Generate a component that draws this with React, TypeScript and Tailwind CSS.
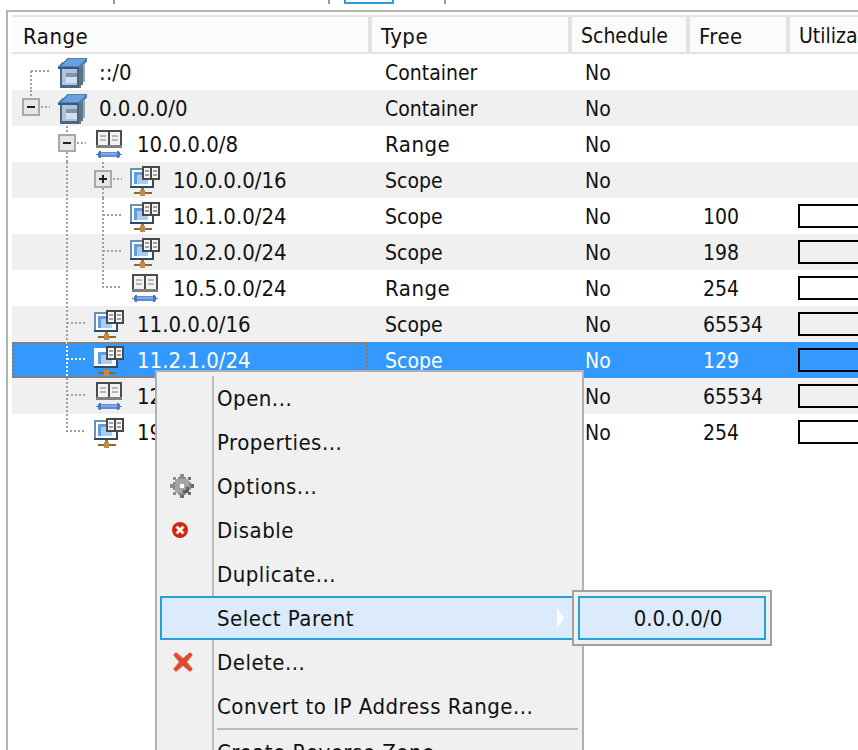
import React from "react";

const font = { fontFamily: '"DejaVu Sans Condensed", "DejaVu Sans", sans-serif' };

function Box() {
  return (
    <svg width="30" height="30" viewBox="0 0 30 30" shapeRendering="crispEdges">
      <path d="M10 0h19v3l-8 8H0V8z" fill="#4f7fb5" />
      <path d="M11 1h16l-7 7H3z" fill="#68a0e0" />
      <path d="M0 9h21v2H0z" fill="#35597f" />
      <path d="M2 11h19v19H2z" fill="#4d6580" />
      <path d="M4 11h15v16H4z" fill="#adc4de" />
      <path d="M21 10h2v20h-2zM23 8h2v19h-2z" fill="#5f7387" />
      <path d="M25 6h2v18h-2z" fill="#9aa6b3" />
      <path d="M8 15h11v4H8z" fill="#8093aa" />
      <path d="M8 19h11v6H8z" fill="#d3e0f0" />
    </svg>
  );
}

function Book() {
  return (
    <svg width="26" height="30" viewBox="0 0 26 30" shapeRendering="crispEdges">
      <path d="M0 0h26v18H0z" fill="#4c4c4c" />
      <path d="M0 15h26v3H0z" fill="#808080" />
      <path d="M2 2h10v13H2zM14 2h10v13H14z" fill="#f3f3f3" />
      <path d="M4 5h6v2H4zM4 9h6v2H4zM16 5h6v2h-6zM16 9h6v2h-6z" fill="#b5b5b5" />
      <path d="M3 22h20v5H3z" fill="#5e8fd6" />
      <path d="M3 23h20v2H3z" fill="#7faae6" />
      <path d="M0 24h3v1H0zM23 24h3v1h-3zM2 22h2v5H2zM22 22h2v5h-2zM3 21h2v7H3zM21 21h2v7h-2z" fill="#4a78c0" />
    </svg>
  );
}

function Scope({ selected = false }: { selected?: boolean }) {
  return (
    <svg width="30" height="30" viewBox="0 0 30 30" shapeRendering="crispEdges">
      <path d="M0 2h24v20H0z" fill={selected ? "#ffffff" : "#6c8fb5"} />
      <path d="M2 4h20v16H2z" fill="#fff" />
      <path d="M4 6h14v12H4z" fill="#5d9de3" />
      <path d="M7 9h11v9H7z" fill="#a8cdf2" />
      <path d="M0 20h24v2H0zM22 8h2v14h-2z" fill="#2f4a68" />
      <path d="M12 0h18v14H12z" fill="#484848" />
      <path d="M14 2h6v10h-6zM22 2h6v10h-6z" fill="#f4f4f4" />
      <path d="M15 4h4v2h-4zM15 8h4v2h-4zM23 4h4v2h-4zM23 8h4v2h-4z" fill="#a0a0a0" />
      <path d="M4 26h18v2H4z" fill="#8a6a32" />
      <path d="M11 22h3v3h-3z" fill="#a87b3e" />
      <path d="M10 24h5v6h-5z" fill="#c08c48" />
    </svg>
  );
}

function Expander({ plus = false }: { plus?: boolean }) {
  return (
    <span className="relative z-10 block h-[18px] w-[18px] border-2 border-[#a9a9a9] bg-[#e6e6e6]">
      <span className="absolute left-[3px] top-[6px] h-[2px] w-[8px] bg-[#222]" />
      {plus && <span className="absolute left-[6px] top-[3px] h-[8px] w-[2px] bg-[#222]" />}
    </span>
  );
}

type Row = {
  label: string;
  type: string;
  free?: string;
  bar?: boolean;
  indent: number;
  iconLeft: number;
  textLeft: number;
  icon: "box" | "book" | "scope";
  exp?: "minus" | "plus";
  lines: string;
  selected?: boolean;
};

const rows: Row[] = [
  { label: "::/0", type: "Container", indent: 0, iconLeft: 46, textLeft: 87, icon: "box", lines: "M19 17V36M19 17H38" },
  { label: "0.0.0.0/0", type: "Container", indent: 0, iconLeft: 46, textLeft: 87, icon: "box", exp: "minus", lines: "M19 0V8M29 17H38" },
  { label: "10.0.0.0/8", type: "Range", indent: 1, iconLeft: 84, textLeft: 125, icon: "book", exp: "minus", lines: "M55 0V8M55 26V36M65 17H74" },
  { label: "10.0.0.0/16", type: "Scope", indent: 2, iconLeft: 118, textLeft: 161, icon: "scope", exp: "plus", lines: "M55 0V36M91 0V8M91 26V36M101 17H110" },
  { label: "10.1.0.0/24", type: "Scope", free: "100", bar: true, indent: 2, iconLeft: 118, textLeft: 161, icon: "scope", lines: "M55 0V36M91 0V36M91 17H110" },
  { label: "10.2.0.0/24", type: "Scope", free: "198", bar: true, indent: 2, iconLeft: 118, textLeft: 161, icon: "scope", lines: "M55 0V36M91 0V36M91 17H110" },
  { label: "10.5.0.0/24", type: "Range", free: "254", bar: true, indent: 2, iconLeft: 120, textLeft: 161, icon: "book", lines: "M55 0V36M91 0V17H110" },
  { label: "11.0.0.0/16", type: "Scope", free: "65534", bar: true, indent: 1, iconLeft: 82, textLeft: 125, icon: "scope", lines: "M55 0V36M55 17H74" },
  { label: "11.2.1.0/24", type: "Scope", free: "129", bar: true, indent: 1, iconLeft: 82, textLeft: 125, icon: "scope", lines: "M55 0V36M55 17H74", selected: true },
  { label: "12.0.0.0/24", type: "Range", free: "65534", bar: true, indent: 1, iconLeft: 84, textLeft: 125, icon: "book", lines: "M55 0V36M55 17H74" },
  { label: "192.168.0.0/24", type: "Scope", free: "254", bar: true, indent: 1, iconLeft: 82, textLeft: 125, icon: "scope", lines: "M55 0V17H74" },
];

function TreeRow({ r, i }: { r: Row; i: number }) {
  const bg = r.selected ? "bg-[#3399ff] text-white" : i % 2 === 1 ? "bg-[#f0f0f0] text-[#111]" : "bg-white text-[#111]";
  return (
    <div className={`relative flex h-9 items-center whitespace-nowrap ${bg}`}>
      <svg width="130" height="36" className="absolute left-0 top-0" fill="none">
        <path d={r.lines} stroke={r.selected ? "#fff" : "#a0a0a0"} strokeWidth="2" strokeDasharray="2 2" />
      </svg>
      {r.selected && <span className="absolute inset-y-0 left-0 w-[356px] border-2 border-dotted border-[#c96a14]" />}
      <div className="relative flex h-9 w-[358px] shrink-0 items-center">
        {r.exp && (
          <span className="absolute top-[8px]" style={{ left: 10 + 36 * r.indent }}>
            <Expander plus={r.exp === "plus"} />
          </span>
        )}
        <span className="absolute top-[4px] h-[30px]" style={{ left: r.iconLeft }}>
          {r.icon === "box" && <Box />}
          {r.icon === "book" && <Book />}
          {r.icon === "scope" && <Scope selected={r.selected} />}
        </span>
        <span className="pt-[2px] text-[22px]" style={{ paddingLeft: r.textLeft }}>
          {r.label}
        </span>
      </div>
      <div className={`w-[200px] shrink-0 pl-[15px] pt-[2px] ${r.type === "Range" ? "text-[22px] tracking-[0.5px]" : ""}`}>{r.type}</div>
      <div className="w-[118px] shrink-0 pl-[15px] pt-[2px]">No</div>
      <div className="w-[100px] shrink-0 pl-[15px] pt-[2px]">{r.free}</div>
      {r.bar && <div className="ml-[10px] h-[24px] w-[70px] shrink-0 border-2 border-black" />}
    </div>
  );
}

function HeaderCell({ label, w, wide, first }: { label: string; w: string; wide?: boolean; first?: boolean }) {
  return (
    <div
      className={`flex h-[35px] shrink-0 items-center border-r-4 border-[#e3e3e3] bg-[#fbfbfb] pt-[4px] ${first ? "pl-[11px]" : "pl-[9px]"} ${w} ${
        wide ? "text-[22px] tracking-[0.5px]" : ""
      }`}
    >
      {label}
    </div>
  );
}

function MenuItem({ label, icon, active, iconPad = "" }: { label: string; icon?: React.ReactNode; active?: boolean; iconPad?: string }) {
  return (
    <div
      className={`relative flex h-11 items-center whitespace-nowrap ${
        active ? "ml-[3px] mr-[5px] border-2 border-[#26a0da] bg-[#dcebfc]" : ""
      }`}
    >
      <span className={`flex shrink-0 items-center justify-start ${iconPad} ${active ? "w-[55px]" : "w-[60px]"}`}>{icon}</span>
      <span className="pt-[2px]">{label}</span>
      {active && <span className="absolute right-[11px] top-[10px] h-0 w-0 border-y-[10px] border-l-[7px] border-y-transparent border-l-white" />}
    </div>
  );
}

function Gear() {
  return (
    <svg width="24" height="24" viewBox="0 0 24 24" shapeRendering="crispEdges">
      <path d="M10 0h4v4h-4zM3 3h3v3H3zM0 10h4v4H0zM3 18h3v3H3z" fill="#8c8c8c" />
      <path d="M10 20h4v4h-4zM18 3h3v3h-3zM20 10h4v4h-4zM18 18h3v3h-3z" fill="#6a6a6a" />
      <path d="M5 5h14v14H5z" fill="#a4a4a4" />
      <path d="M8 3h8v2H8zM3 8h2v8H3zM19 8h2v8h-2zM8 19h8v2H8z" fill="#8a8a8a" />
      <path d="M13 19h6v-6h-3v3h-3z" fill="#5f5f5f" />
      <path d="M10 10h4v4h-4z" fill="#fff" />
    </svg>
  );
}

function Stop() {
  return (
    <svg width="16" height="16" viewBox="0 0 16 16">
      <circle cx="8" cy="8" r="8" fill="#d2260c" />
      <path d="M4.5 4.5l7 7M11.5 4.5l-7 7" stroke="#fde4dc" strokeWidth="3" />
      <rect x="6" y="6" width="4" height="4" fill="#fff" />
    </svg>
  );
}

function RedX() {
  return (
    <svg width="22" height="22" viewBox="0 0 22 22">
      <path d="M1 4l3-3 7 6 7-6 3 3-6 7 6 7-3 3-7-6-7 6-3-3 6-7z" fill="#dd4a30" stroke="#f2b4a6" strokeWidth="1" />
    </svg>
  );
}

export default function App() {
  return (
    <div className="relative h-[750px] w-[858px] overflow-hidden bg-white text-[21px] leading-none text-[#111]" style={font}>
      <div className="flex h-[10px] items-start">
        <div className="ml-[113px] h-[4px] w-[217px] border-x-2 border-[#999]" />
        <div className="ml-[14px] h-[4px] w-[50px] border-x-2 border-b-2 border-[#26a0da]" />
        <div className="h-[4px] w-[52px] border-r-2 border-[#999]" />
      </div>
      <div className="ml-[6px] h-[740px] border-l-2 border-t-2 border-[#b4b4b4] pl-1 pt-[3px]">
        <div className="flex overflow-hidden border-y-2 border-[#e3e3e3]">
          <HeaderCell label="Range" w="w-[360px]" wide first />
          <HeaderCell label="Type" w="w-[200px]" wide />
          <HeaderCell label="Schedule" w="w-[118px]" />
          <HeaderCell label="Free" w="w-[100px]" wide />
          <HeaderCell label="Utilization" w="w-[100px]" />
        </div>
        <div>
          {rows.map((r, i) => (
            <TreeRow key={r.label} r={r} i={i} />
          ))}
        </div>
      </div>

      <div className="absolute left-[155px] top-[370px] h-[400px] w-[429px] border-2 border-[#b0b0b0] bg-[#f0f0f0] pt-[4px] text-[22px] tracking-[0.5px]">
        <div className="absolute bottom-0 left-[55px] top-[4px] w-[2px] bg-[#bdbdbd]" />
        <MenuItem label="Open..." />
        <MenuItem label="Properties..." />
        <MenuItem label="Options..." icon={<Gear />} iconPad="pl-[13px]" />
        <MenuItem label="Disable" icon={<Stop />} iconPad="pl-[15px]" />
        <MenuItem label="Duplicate..." />
        <MenuItem label="Select Parent" active />
        <MenuItem label="Delete..." icon={<RedX />} iconPad="pl-[15px]" />
        <MenuItem label="Convert to IP Address Range..." />
        <div className="ml-[60px] mr-[4px] h-[2px] bg-[#bdbdbd]" />
        <MenuItem label="Create Reverse Zone..." />
      </div>

      <div className="absolute left-[572px] top-[590px] w-[200px] border-2 border-[#a0a0a0] bg-[#f0f0f0] p-1 text-[22px]">
        <div className="flex h-11 items-center justify-center border-2 border-[#26a0da] bg-[#dcebfc] pl-[12px] pt-[2px]">0.0.0.0/0</div>
      </div>
    </div>
  );
}
